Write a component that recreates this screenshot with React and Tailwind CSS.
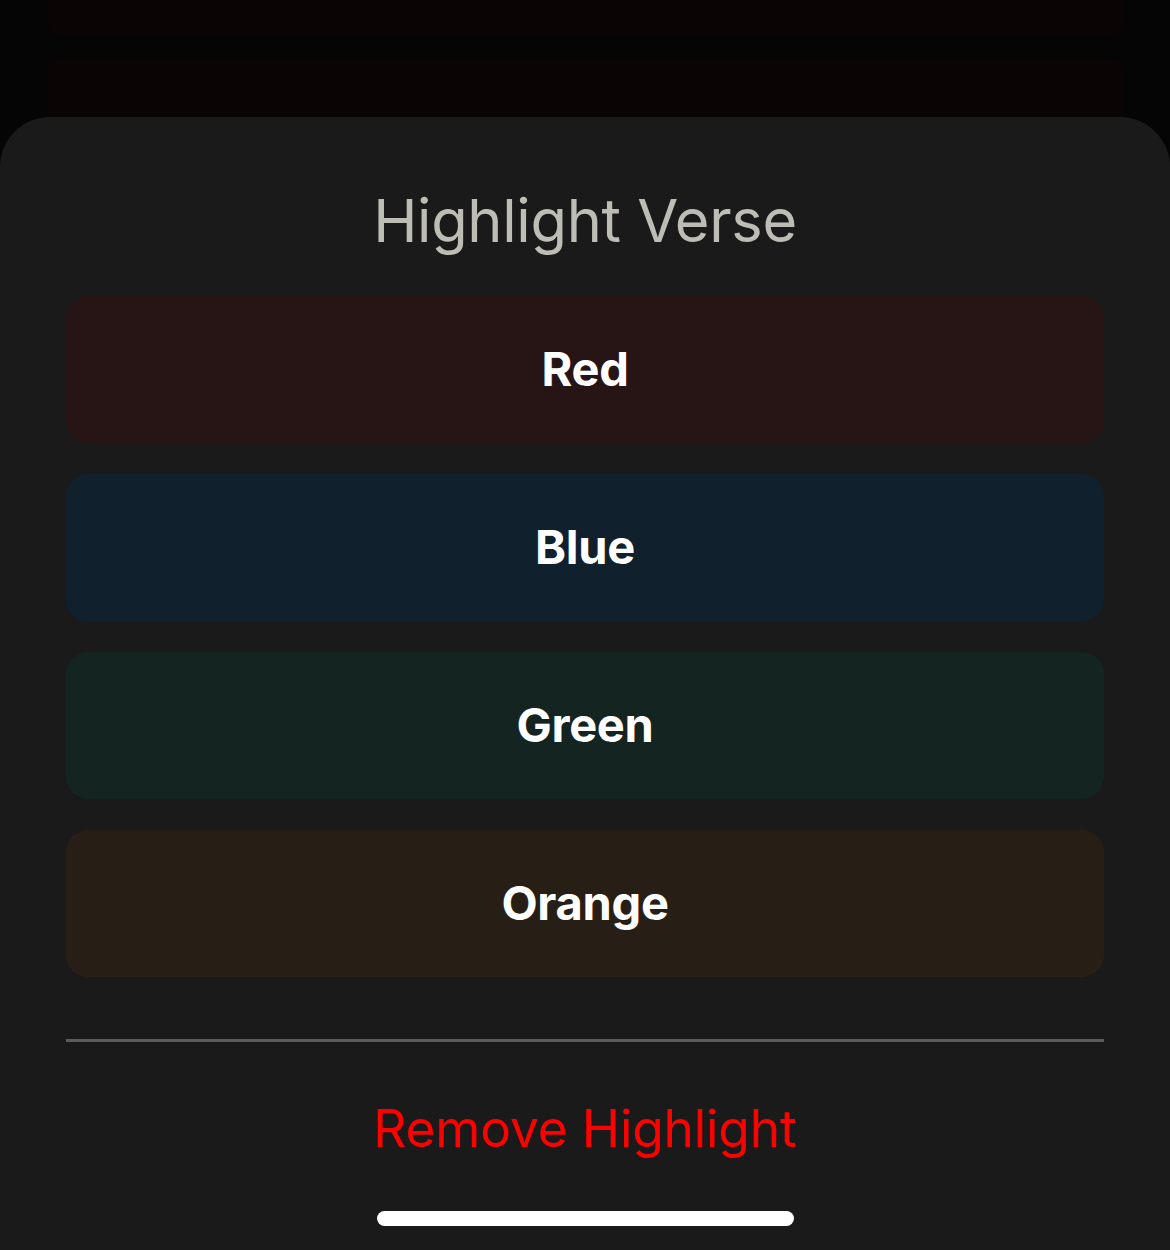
import React from 'react';

const COLORS = [
  { label: 'Red', bg: 'bg-[#271516]' },
  { label: 'Blue', bg: 'bg-[#11202d]' },
  { label: 'Green', bg: 'bg-[#132421]' },
  { label: 'Orange', bg: 'bg-[#271f16]' },
];

export default function App() {
  return (
    <div
      className="h-[1250px] w-full bg-[#050505] flex flex-col overflow-hidden"
      style={{ fontFamily: 'Inter, "Liberation Sans", sans-serif' }}
    >
      {/* dimmed page behind the sheet */}
      <div className="h-[117px] px-[47px] flex flex-col shrink-0">
        <div className="h-[35px] bg-[#0a0404] rounded-b-[14px]" />
        <div className="flex-1 mt-[23px] bg-[#0a0404] rounded-t-[14px]" />
      </div>

      {/* action sheet */}
      <div className="flex-1 bg-[#1a1a1a] rounded-t-[50px] flex flex-col items-center pt-[67px]">
        <h2 className="text-[59.5px] leading-[72px] text-[#bdbdb5] font-normal tracking-[-0.3px]">
          Highlight Verse
        </h2>

        <div className="w-full px-[66px] mt-[40px] flex flex-col gap-[31px]">
          {COLORS.map((c) => (
            <button
              key={c.label}
              className={`h-[147px] w-full rounded-[22px] ${c.bg} text-white text-[47px] font-bold tracking-[-0.3px]`}
            >
              {c.label}
            </button>
          ))}
        </div>

        <div className="w-full px-[66px] mt-[62px]">
          <div className="h-[3px] bg-[#5c5c5c]" />
        </div>

        <button className="mt-[54px] text-[51.5px] leading-[64px] text-[#ff0000] font-normal tracking-[-0.2px]">
          Remove Highlight
        </button>

        <div className="mt-[51px] w-[417px] h-[15px] rounded-full bg-white" />
      </div>
    </div>
  );
}
